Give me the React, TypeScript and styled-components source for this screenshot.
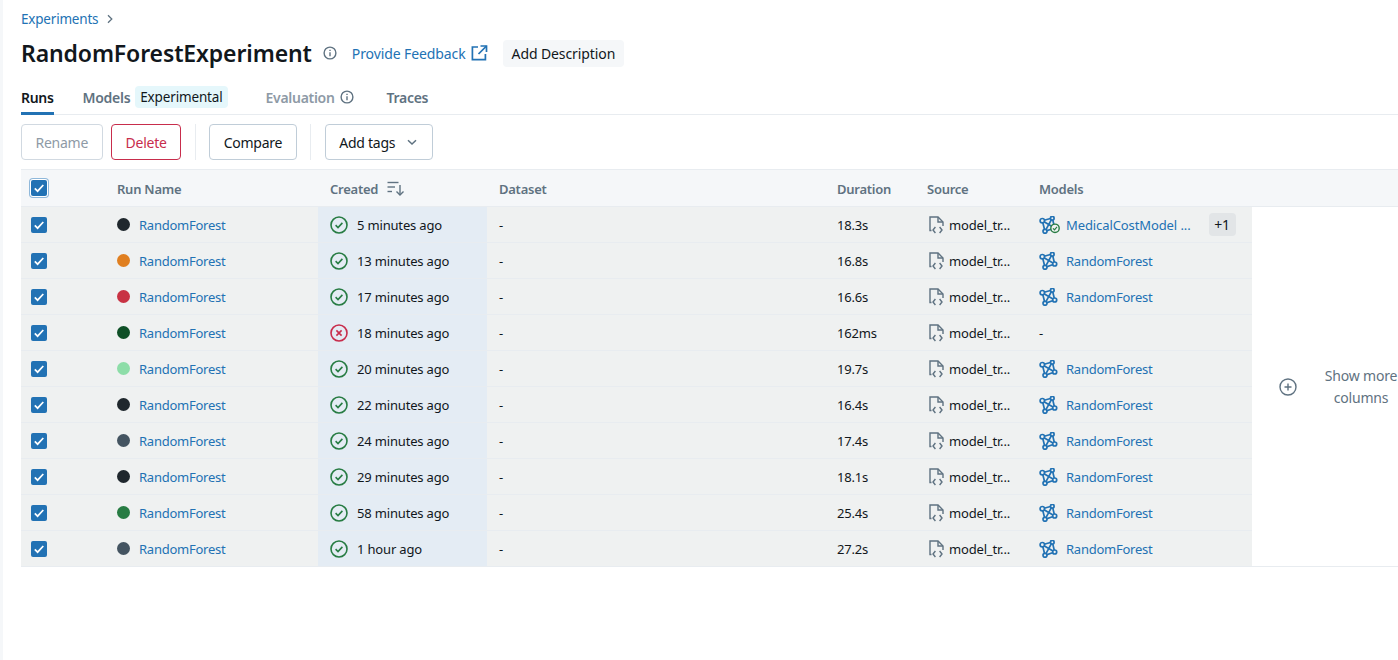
import styled, { createGlobalStyle } from "styled-components";

const GlobalStyle = createGlobalStyle`
  html, body {
    margin: 0;
    height: 100%;
    overflow: hidden;
    background: #ffffff;
    font-family: "Noto Sans", "Open Sans", sans-serif;
    font-size: 13px;
    color: #11171c;
  }
  * { box-sizing: border-box; }
`;

const COLUMNS = "84px 213px 169px 338px 90px 112px 225px";

const Page = styled.div`
  height: 660px;
  width: 1398px;
  overflow: hidden;
  border-left: 3px solid #f5f7f9;
  padding: 9px 0 0 18px;
`;

const Breadcrumb = styled.div`
  display: flex;
  align-items: center;
  gap: 8px;
  height: 20px;
  color: #2272b4;
  font-size: 13.5px;
  letter-spacing: -0.2px;
`;

const TitleRow = styled.div`
  display: flex;
  align-items: center;
  height: 32px;
  margin-top: 8px;
`;

const Title = styled.h1`
  margin: 0 11px 0 0;
  font-size: 23px;
  line-height: 32px;
  font-weight: 600;
  letter-spacing: -0.12px;
  color: #11171c;
`;

const FeedbackLink = styled.a`
  display: flex;
  align-items: center;
  gap: 5px;
  margin-left: 15px;
  color: #2272b4;
  font-size: 14px;
  letter-spacing: -0.1px;
`;

const DescriptionButton = styled.button`
  margin-left: 15px;
  height: 27px;
  padding: 0 9px;
  border: 0;
  border-radius: 4px;
  background: #f5f7f9;
  font: inherit;
  font-size: 14px;
  letter-spacing: -0.1px;
  color: #11171c;
`;

const Tabs = styled.div`
  display: flex;
  align-items: stretch;
  height: 40px;
  margin-top: 6px;
  border-bottom: 1px solid #e8ecf0;
`;

const Tab = styled.div<{ $active?: boolean; $disabled?: boolean; $gap: number }>`
  display: flex;
  align-items: center;
  gap: 5px;
  margin-right: ${(p) => p.$gap}px;
  margin-bottom: -1px;
  padding-top: 7px;
  font-size: 14px;
  font-weight: 600;
  letter-spacing: -0.3px;
  color: ${(p) => (p.$active ? "#11171c" : p.$disabled ? "#8e9aa6" : "#5f7281")};
  border-bottom: 3px solid ${(p) => (p.$active ? "#2272b4" : "transparent")};
`;

const ExperimentalTag = styled.span`
  height: 22px;
  line-height: 22px;
  margin-left: 0;
  padding: 0 5px;
  border-radius: 4px;
  background: #e5f7fb;
  color: #11171c;
  font-weight: 400;
  font-size: 13.5px;
  letter-spacing: -0.15px;
`;

const Toolbar = styled.div`
  display: flex;
  align-items: center;
  height: 36px;
  margin-top: 9px;
  gap: 13.5px;
`;

const ButtonGroup = styled.div`
  display: flex;
  gap: 8.5px;
`;

const ToolButton = styled.button<{ $tone?: "muted" | "danger" }>`
  display: flex;
  align-items: center;
  justify-content: center;
  gap: 11px;
  height: 36px;
  padding: 0 13.5px;
  border-radius: 4px;
  background: #ffffff;
  font: inherit;
  font-size: 14px;
  letter-spacing: -0.25px;
  color: ${(p) => (p.$tone === "muted" ? "#8e9aa6" : p.$tone === "danger" ? "#c82d4c" : "#11171c")};
  border: 1px solid ${(p) => (p.$tone === "muted" ? "#d1d9e1" : p.$tone === "danger" ? "#c82d4c" : "#c0cdd8")};
`;

const Divider = styled.div`
  width: 1px;
  height: 36px;
  background: #e8ecf0;
`;

const HeaderRow = styled.div`
  display: grid;
  grid-template-columns: ${COLUMNS} 1fr;
  height: 38px;
  margin-top: 9px;
  background: #f5f7f9;
  border-top: 1px solid #e8ecf0;
  border-bottom: 1px solid #e8ecf0;
`;

const HeaderCell = styled.div`
  display: flex;
  align-items: center;
  gap: 9px;
  padding: 1px 0 0 12px;
  font-weight: 600;
  font-size: 13px;
  letter-spacing: -0.25px;
  color: #5f7281;
`;

const CheckCell = styled.div`
  display: flex;
  align-items: center;
  padding-left: 10px;
`;

const Checkbox = styled.span<{ $focused?: boolean }>`
  display: flex;
  align-items: center;
  justify-content: center;
  width: 16px;
  height: 16px;
  border-radius: 2px;
  background: #2272b4;
  box-shadow: ${(p) => (p.$focused ? "0 0 0 1px #ffffff, 0 0 0 2px #8fb8da" : "none")};
`;

const TableBody = styled.div`
  display: flex;
  border-bottom: 1px solid #e8ecf0;
`;

const Rows = styled.div`
  width: 1231px;
  flex: none;
`;

const Row = styled.div`
  display: grid;
  grid-template-columns: ${COLUMNS};
  height: 36px;
  background: #eff1f1;
  border-bottom: 1px solid #e8ecf0;

  &:last-child {
    height: 35px;
    border-bottom: 0;
  }
`;

const Cell = styled.div<{ $sorted?: boolean }>`
  display: flex;
  align-items: center;
  gap: 9px;
  min-width: 0;
  padding-left: 12px;
  font-size: 13px;
  letter-spacing: -0.17px;
  color: #11171c;
  background: ${(p) => (p.$sorted ? "#e4ecf4" : "transparent")};
`;

const RunDot = styled.span<{ $color: string }>`
  flex: none;
  width: 13px;
  height: 13px;
  border-radius: 50%;
  background: ${(p) => p.$color};
`;

const RunLink = styled.a`
  color: #2272b4;
  letter-spacing: -0.25px;
`;

const ModelLink = styled(RunLink)<{ $wide?: boolean }>`
  letter-spacing: ${(p) => (p.$wide ? "-0.1px" : "-0.25px")};
`;

const SourceGlyph = styled.span`
  display: inline-flex;
  flex: none;
  margin-left: 2px;
  margin-right: -4px;
`;

const ModelGlyph = styled.span`
  display: inline-flex;
  flex: none;
  margin-right: -3px;
`;

const MoreBadge = styled.span`
  margin-left: 9px;
  width: 27px;
  height: 23px;
  border-radius: 4px;
  background: #e2e5e7;
  display: flex;
  align-items: center;
  justify-content: center;
  color: #11171c;
  font-size: 14px;
`;

const ShowMore = styled.div`
  flex: 1;
  display: flex;
  align-items: center;
  min-width: 0;
  padding-left: 27px;
  gap: 27px;
  color: #5f7281;
  font-size: 14px;
  letter-spacing: -0.2px;
`;

const ShowMoreText = styled.div`
  width: 74px;
  flex: none;
  white-space: nowrap;
  text-align: center;
  line-height: 22px;
  margin-top: 1px;
`;

const IconWrap = styled.span`
  display: inline-flex;
  flex: none;
`;

function CheckMark() {
  return (
    <svg width="12" height="12" viewBox="0 0 12 12" fill="none">
      <path d="M1.8 6.4 4.6 9.2 10.3 3" stroke="#fff" strokeWidth="1.7" />
    </svg>
  );
}

function InfoIcon() {
  return (
    <IconWrap>
      <svg width="14" height="14" viewBox="0 0 14 14" fill="none" stroke="#5f7281" strokeWidth="1.4">
        <circle cx="7" cy="7" r="5.9" />
        <path d="M7 6.2v4" />
        <path d="M7 3.7v1.4" />
      </svg>
    </IconWrap>
  );
}

function ExternalIcon() {
  return (
    <svg width="17" height="16" viewBox="0 0 17 16" fill="none" stroke="#2272b4" strokeWidth="1.7">
      <path d="M7 2H1.4v12.6h13V9" />
      <path d="M9.5 1h6v6" />
      <path d="M15.5 1 7.5 9" />
    </svg>
  );
}

function Chevron({ size, color }: { size: number; color: string }) {
  return (
    <svg width={size} height={size} viewBox="0 0 12 12" fill="none" stroke={color} strokeWidth="1.5">
      <path d="M2 4.2 6 8l4-3.8" />
    </svg>
  );
}

function BreadcrumbChevron() {
  return (
    <svg width="8" height="10" viewBox="0 0 8 10" fill="none" stroke="#5f7281" strokeWidth="1.3">
      <path d="M2 1.2 5.8 5 2 8.8" />
    </svg>
  );
}

function SortIcon() {
  return (
    <svg width="17" height="15" viewBox="0 0 17 15" fill="none" stroke="#5f7281" strokeWidth="1.4">
      <path d="M0.5 1.5h11" />
      <path d="M0.5 6h7.5" />
      <path d="M0.5 10.5h4.5" />
      <path d="M13 4v10" />
      <path d="M9.5 10.5 13 14l3.5-3.5" />
    </svg>
  );
}

function StatusIcon({ failed }: { failed?: boolean }) {
  const color = failed ? "#c82d4c" : "#277c43";
  return (
    <IconWrap>
      <svg width="18" height="18" viewBox="0 0 18 18" fill="none" stroke={color} strokeWidth="1.6">
        <circle cx="9" cy="9" r="8" />
        {failed ? <path d="M6.4 6.4l5.2 5.2M11.6 6.4l-5.2 5.2" /> : <path d="M5.6 9.2 8 11.5l4.4-4.6" />}
      </svg>
    </IconWrap>
  );
}

function SourceIcon() {
  return (
    <SourceGlyph>
      <svg width="15" height="18" viewBox="0 0 15 18" fill="none" stroke="#5f7281" strokeWidth="1.4">
        <path d="M2.5 14.5H1V1h8l5 5v4" />
        <path d="M9 1v5h5" />
        <path d="M6.4 11 4 14l2.4 3" />
        <path d="M10.6 11 13 14l-2.4 3" />
      </svg>
    </SourceGlyph>
  );
}

function ModelIcon({ registered }: { registered?: boolean }) {
  return (
    <ModelGlyph>
      <svg width="21" height="18" viewBox="0 0 21 18" fill="none" stroke="#2272b4" strokeWidth="1.7">
        <path d="M3.3 4.7 13.3 2 15.7 12 6 15.3Z" />
        <path d="M3.3 4.7 15.7 12M13.3 2 6 15.3" />
        <circle cx="3.3" cy="4.7" r="2.2" fill="#eff1f1" />
        <circle cx="13.3" cy="2.2" r="1.8" fill="#eff1f1" />
        <circle cx="15.7" cy="12" r="2" fill="#eff1f1" />
        <circle cx="6" cy="15.3" r="2" fill="#eff1f1" />
        {registered && (
          <>
            <circle cx="16" cy="12.3" r="4.2" fill="#eff1f1" stroke="#277c43" strokeWidth="1.4" />
            <path d="M14 12.4 15.5 13.8l2.5-2.9" stroke="#277c43" strokeWidth="1.2" />
          </>
        )}
      </svg>
    </ModelGlyph>
  );
}

function PlusCircleIcon() {
  return (
    <IconWrap>
      <svg width="18" height="18" viewBox="0 0 18 18" fill="none" stroke="#5f7281" strokeWidth="1.4">
        <circle cx="9" cy="9" r="8" />
        <path d="M9 5.5v7M5.5 9h7" />
      </svg>
    </IconWrap>
  );
}

type Run = {
  color: string;
  created: string;
  duration: string;
  failed?: boolean;
  noModel?: boolean;
};

const RUNS: Run[] = [
  { color: "#1f272d", created: "5 minutes ago", duration: "18.3s" },
  { color: "#e07f20", created: "13 minutes ago", duration: "16.8s" },
  { color: "#c83243", created: "17 minutes ago", duration: "16.6s" },
  { color: "#0e4f26", created: "18 minutes ago", duration: "162ms", failed: true, noModel: true },
  { color: "#8ddda8", created: "20 minutes ago", duration: "19.7s" },
  { color: "#1f272d", created: "22 minutes ago", duration: "16.4s" },
  { color: "#445461", created: "24 minutes ago", duration: "17.4s" },
  { color: "#1f272d", created: "29 minutes ago", duration: "18.1s" },
  { color: "#277c43", created: "58 minutes ago", duration: "25.4s" },
  { color: "#445461", created: "1 hour ago", duration: "27.2s" },
];

export default function App() {
  return (
    <>
      <GlobalStyle />
      <Page>
        <Breadcrumb>
          Experiments
          <BreadcrumbChevron />
        </Breadcrumb>
        <TitleRow>
          <Title>RandomForestExperiment</Title>
          <InfoIcon />
          <FeedbackLink>
            Provide Feedback
            <ExternalIcon />
          </FeedbackLink>
          <DescriptionButton>Add Description</DescriptionButton>
        </TitleRow>
        <Tabs>
          <Tab $active $gap={29}>Runs</Tab>
          <Tab $gap={38}>
            Models
            <ExperimentalTag>Experimental</ExperimentalTag>
          </Tab>
          <Tab $disabled $gap={33}>
            Evaluation
            <InfoIcon />
          </Tab>
          <Tab $gap={0}>Traces</Tab>
        </Tabs>
        <Toolbar>
          <ButtonGroup>
            <ToolButton $tone="muted">Rename</ToolButton>
            <ToolButton $tone="danger">Delete</ToolButton>
          </ButtonGroup>
          <Divider />
          <ToolButton>Compare</ToolButton>
          <Divider />
          <ToolButton>
            Add tags
            <Chevron size={12} color="#5f7281" />
          </ToolButton>
        </Toolbar>
        <HeaderRow>
          <CheckCell>
            <Checkbox $focused>
              <CheckMark />
            </Checkbox>
          </CheckCell>
          <HeaderCell>Run Name</HeaderCell>
          <HeaderCell>
            Created
            <SortIcon />
          </HeaderCell>
          <HeaderCell>Dataset</HeaderCell>
          <HeaderCell>Duration</HeaderCell>
          <HeaderCell>Source</HeaderCell>
          <HeaderCell>Models</HeaderCell>
        </HeaderRow>
        <TableBody>
          <Rows>
            {RUNS.map((run, i) => (
              <Row key={i}>
                <CheckCell>
                  <Checkbox>
                    <CheckMark />
                  </Checkbox>
                </CheckCell>
                <Cell>
                  <RunDot $color={run.color} />
                  <RunLink>RandomForest</RunLink>
                </Cell>
                <Cell $sorted>
                  <StatusIcon failed={run.failed} />
                  {run.created}
                </Cell>
                <Cell>-</Cell>
                <Cell>{run.duration}</Cell>
                <Cell>
                  <SourceIcon />
                  model_tr...
                </Cell>
                <Cell>
                  {run.noModel ? (
                    "-"
                  ) : (
                    <>
                      <ModelIcon registered={i === 0} />
                      <ModelLink $wide={i === 0}>{i === 0 ? "MedicalCostModel ..." : "RandomForest"}</ModelLink>
                      {i === 0 && <MoreBadge>+1</MoreBadge>}
                    </>
                  )}
                </Cell>
              </Row>
            ))}
          </Rows>
          <ShowMore>
            <PlusCircleIcon />
            <ShowMoreText>
              Show more
              <br />
              columns
            </ShowMoreText>
          </ShowMore>
        </TableBody>
      </Page>
    </>
  );
}
